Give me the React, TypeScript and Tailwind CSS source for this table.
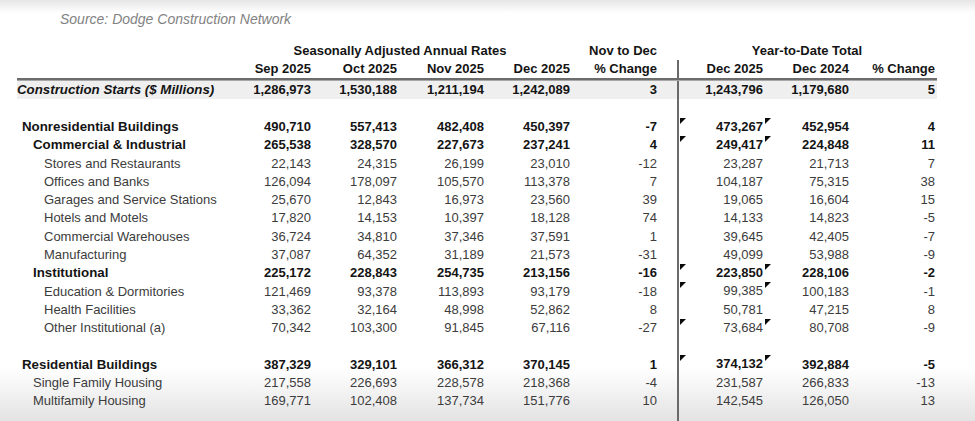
import React from "react";

type RowData = {
  label: string;
  indent: 0 | 1 | 2;
  bold?: boolean;
  marks?: boolean;
  vals: string[];
};

const rows: (RowData | null)[] = [
  { label: "Nonresidential Buildings", indent: 0, bold: true, marks: true, vals: ["490,710", "557,413", "482,408", "450,397", "-7", "473,267", "452,954", "4"] },
  { label: "Commercial & Industrial", indent: 1, bold: true, marks: true, vals: ["265,538", "328,570", "227,673", "237,241", "4", "249,417", "224,848", "11"] },
  { label: "Stores and Restaurants", indent: 2, vals: ["22,143", "24,315", "26,199", "23,010", "-12", "23,287", "21,713", "7"] },
  { label: "Offices and Banks", indent: 2, vals: ["126,094", "178,097", "105,570", "113,378", "7", "104,187", "75,315", "38"] },
  { label: "Garages and Service Stations", indent: 2, vals: ["25,670", "12,843", "16,973", "23,560", "39", "19,065", "16,604", "15"] },
  { label: "Hotels and Motels", indent: 2, vals: ["17,820", "14,153", "10,397", "18,128", "74", "14,133", "14,823", "-5"] },
  { label: "Commercial Warehouses", indent: 2, vals: ["36,724", "34,810", "37,346", "37,591", "1", "39,645", "42,405", "-7"] },
  { label: "Manufacturing", indent: 2, vals: ["37,087", "64,352", "31,189", "21,573", "-31", "49,099", "53,988", "-9"] },
  { label: "Institutional", indent: 1, bold: true, marks: true, vals: ["225,172", "228,843", "254,735", "213,156", "-16", "223,850", "228,106", "-2"] },
  { label: "Education & Dormitories", indent: 2, marks: true, vals: ["121,469", "93,378", "113,893", "93,179", "-18", "99,385", "100,183", "-1"] },
  { label: "Health Facilities", indent: 2, vals: ["33,362", "32,164", "48,998", "52,862", "8", "50,781", "47,215", "8"] },
  { label: "Other Institutional (a)", indent: 2, marks: true, vals: ["70,342", "103,300", "91,845", "67,116", "-27", "73,684", "80,708", "-9"] },
  null,
  { label: "Residential Buildings", indent: 0, bold: true, marks: true, vals: ["387,329", "329,101", "366,312", "370,145", "1", "374,132", "392,884", "-5"] },
  { label: "Single Family Housing", indent: 1, vals: ["217,558", "226,693", "228,578", "218,368", "-4", "231,587", "266,833", "-13"] },
  { label: "Multifamily Housing", indent: 1, vals: ["169,771", "102,408", "137,734", "151,776", "10", "142,545", "126,050", "13"] },
];

const indentCls = ["pl-[5px]", "pl-[16px]", "pl-[27px]"];

function Marker({ className }: { className: string }) {
  return (
    <span
      className={`absolute top-0 h-0 w-0 border-t-[6px] border-r-[6px] border-t-[#0a0a0a] border-r-transparent ${className}`}
    />
  );
}

function Spacer({ line = true }: { line?: boolean }) {
  return <div className={`w-[22px] shrink-0 self-stretch ${line ? "border-r-2 border-[#6a6a6a]" : ""}`} />;
}

function DataRow({ r }: { r: RowData }) {
  const txt = r.bold ? "font-bold text-[#141414]" : "text-[#3c3c3c]";
  const v = r.vals;
  return (
    <div className={`flex h-[18.27px] items-center leading-[18px] ${txt}`}>
      <div className={`w-[223px] shrink-0 whitespace-nowrap ${indentCls[r.indent]} ${r.bold ? "text-[13.3px]" : ""}`}>{r.label}</div>
      <div className="w-[71px] shrink-0 text-right">{v[0]}</div>
      <div className="w-[86px] shrink-0 text-right">{v[1]}</div>
      <div className="w-[87px] shrink-0 text-right">{v[2]}</div>
      <div className="w-[86px] shrink-0 text-right">{v[3]}</div>
      <div className="w-[87px] shrink-0 text-right">{v[4]}</div>
      <Spacer />
      <div className="relative w-[84px] shrink-0 self-stretch text-right">
        {r.marks && <Marker className="left-[1px]" />}
        <span className="leading-[18.27px]">{v[5]}</span>
        {r.marks && <Marker className="right-[-8px]" />}
      </div>
      <div className="w-[86px] shrink-0 text-right">{v[6]}</div>
      <div className="w-[86px] shrink-0 text-right">{v[7]}</div>
      <div className="w-[2px] shrink-0" />
    </div>
  );
}

export default function App() {
  return (
    <div className="flex h-[421px] w-[975px] flex-col overflow-hidden bg-[linear-gradient(to_bottom,#e6e6e6_0px,#ffffff_13px,#ffffff_368px,#e3e3e3_421px)] pl-[17px] font-['Liberation_Sans',Arial,sans-serif] text-[13px]">
      {/* Source */}
      <div className="h-[42px] pt-[10px]">
        <div className="pl-[43px] text-[14px] leading-[18px] italic text-[#828282]">Source: Dodge Construction Network</div>
      </div>

      {/* Header row 1 */}
      <div className="flex h-[18px] items-center font-bold leading-[18px] text-[#141414]">
        <div className="w-[223px] shrink-0" />
        <div className="w-[330px] shrink-0 pr-[10px] text-center">Seasonally Adjusted Annual Rates</div>
        <div className="w-[87px] shrink-0 text-right">Nov to Dec</div>
        <Spacer line={false} />
        <div className="w-[256px] shrink-0 text-center">Year-to-Date Total</div>
      </div>

      {/* Header row 2 */}
      <div className="flex h-[18px] items-center font-bold leading-[18px] text-[#141414]">
        <div className="w-[223px] shrink-0" />
        <div className="w-[71px] shrink-0 text-right">Sep 2025</div>
        <div className="w-[86px] shrink-0 text-right">Oct 2025</div>
        <div className="w-[87px] shrink-0 text-right">Nov 2025</div>
        <div className="w-[86px] shrink-0 text-right">Dec 2025</div>
        <div className="w-[87px] shrink-0 text-right">% Change</div>
        <Spacer />
        <div className="w-[84px] shrink-0 text-right">Dec 2025</div>
        <div className="w-[86px] shrink-0 text-right">Dec 2024</div>
        <div className="w-[86px] shrink-0 text-right">% Change</div>
      </div>

      {/* Thick rule */}
      <div className="h-[3px] w-[920px] border-t-2 border-b border-t-[#6c6c6c] border-b-[#a8a8a8]" />

      {/* Total row */}
      <div className="flex h-[18px] w-[920px] items-center bg-[#efefef] font-bold leading-[18px] text-[#141414]">
        <div className="w-[223px] shrink-0 whitespace-nowrap text-[13.3px] italic">Construction Starts ($ Millions)</div>
        <div className="w-[71px] shrink-0 text-right">1,286,973</div>
        <div className="w-[86px] shrink-0 text-right">1,530,188</div>
        <div className="w-[87px] shrink-0 text-right">1,211,194</div>
        <div className="w-[86px] shrink-0 text-right">1,242,089</div>
        <div className="w-[87px] shrink-0 text-right">3</div>
        <Spacer />
        <div className="w-[84px] shrink-0 text-right">1,243,796</div>
        <div className="w-[86px] shrink-0 text-right">1,179,680</div>
        <div className="w-[86px] shrink-0 text-right">5</div>
      </div>

      {/* Blank row */}
      <div className="flex h-[19px]">
        <div className="w-[640px] shrink-0" />
        <Spacer />
      </div>

      {rows.map((r, i) =>
        r ? (
          <DataRow key={i} r={r} />
        ) : (
          <div key={i} className="flex h-[18.27px]">
            <div className="w-[640px] shrink-0" />
            <Spacer />
          </div>
        )
      )}

      {/* Filler to bottom */}
      <div className="flex flex-1">
        <div className="w-[640px] shrink-0" />
        <Spacer />
      </div>
    </div>
  );
}
